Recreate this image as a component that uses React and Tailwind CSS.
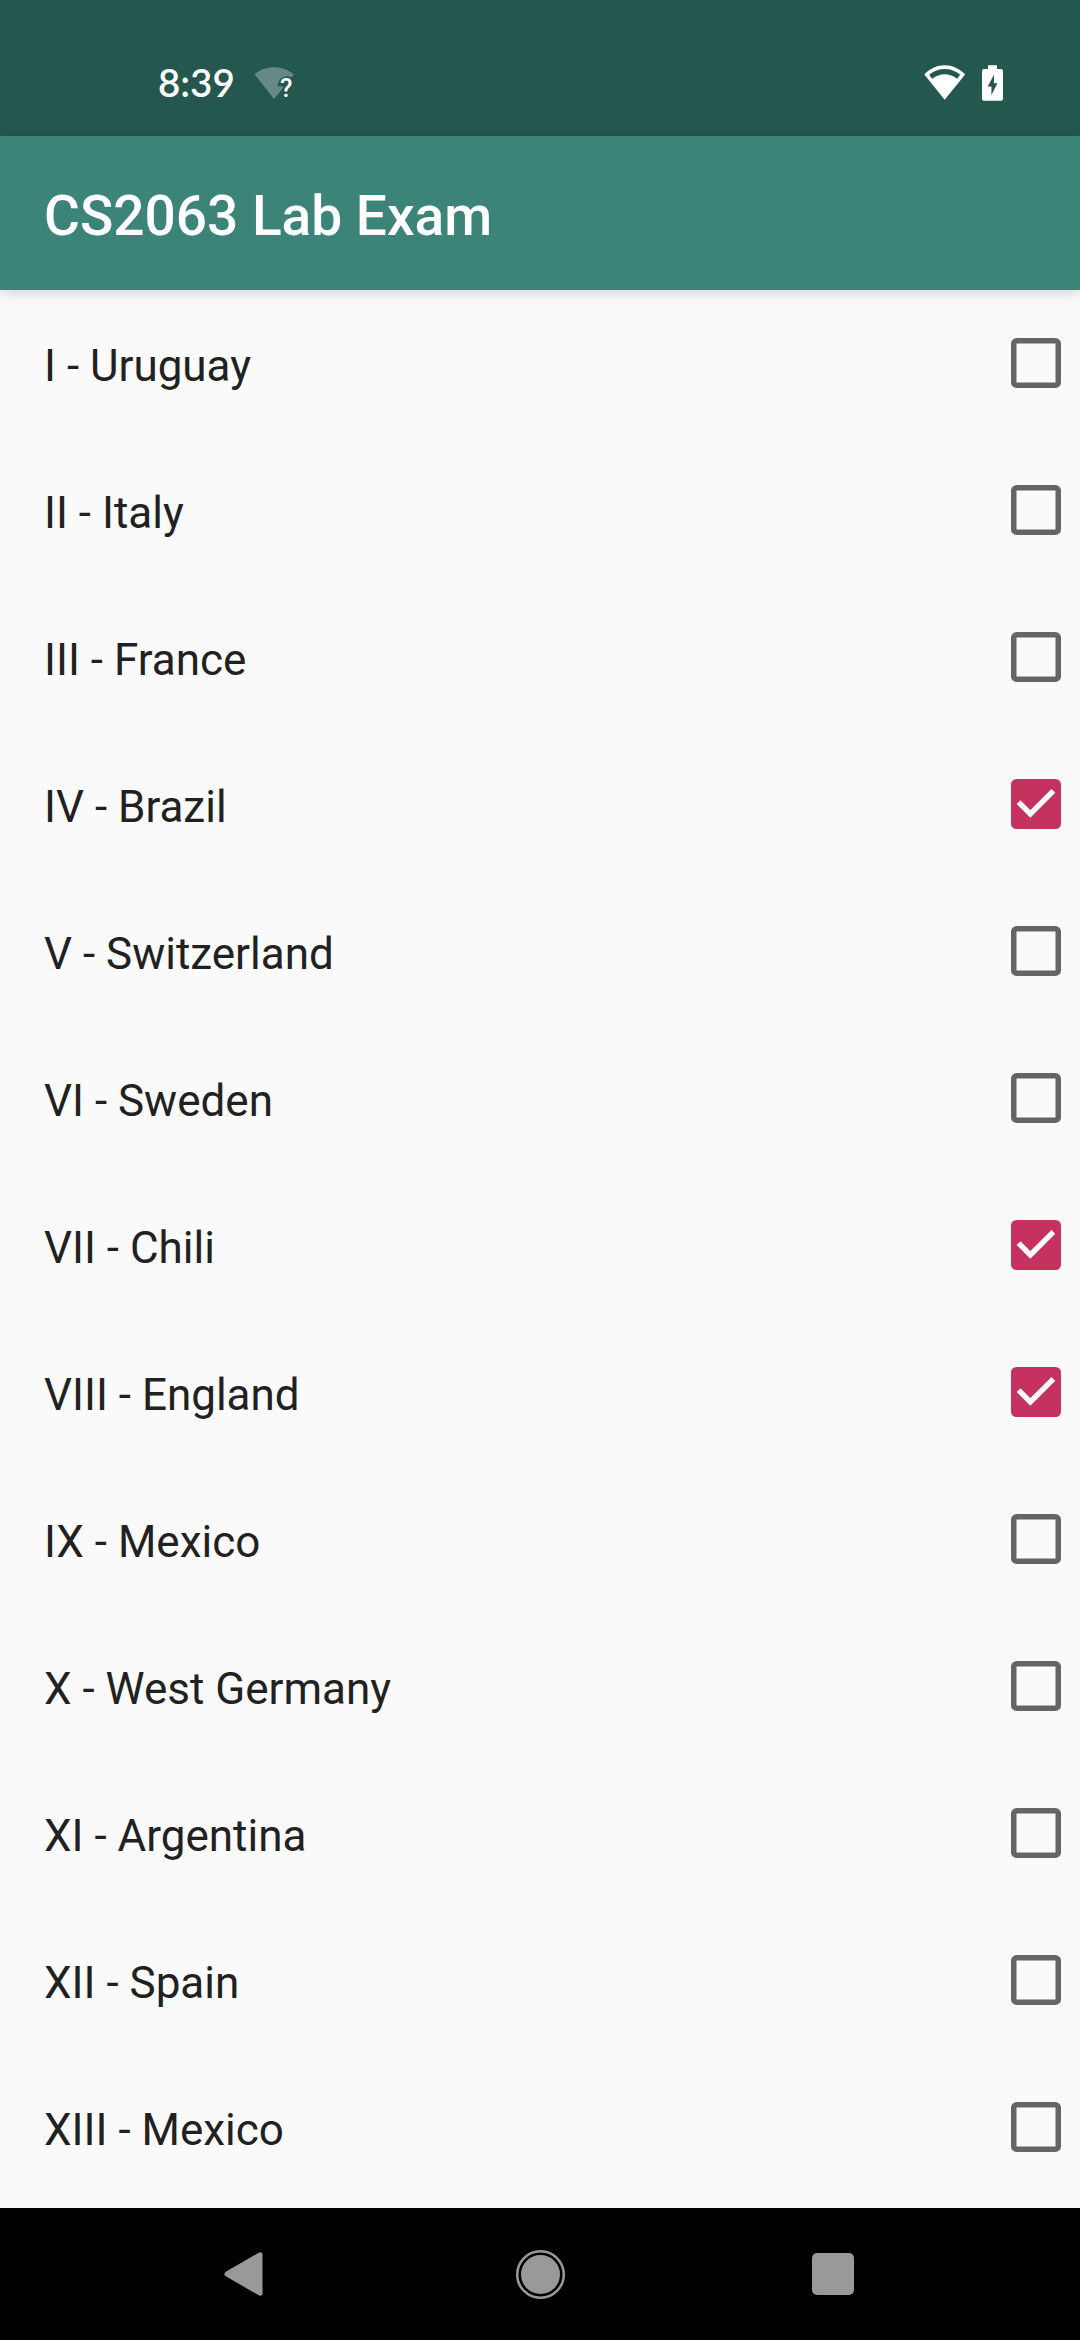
const items = [
  { label: 'I - Uruguay', checked: false },
  { label: 'II - Italy', checked: false },
  { label: 'III - France', checked: false },
  { label: 'IV - Brazil', checked: true },
  { label: 'V - Switzerland', checked: false },
  { label: 'VI - Sweden', checked: false },
  { label: 'VII - Chili', checked: true },
  { label: 'VIII - England', checked: true },
  { label: 'IX - Mexico', checked: false },
  { label: 'X - West Germany', checked: false },
  { label: 'XI - Argentina', checked: false },
  { label: 'XII - Spain', checked: false },
  { label: 'XIII - Mexico', checked: false },
];

function WifiUnknown() {
  return (
    <svg className="block h-[44px] w-[48px]" viewBox="0 0 48 44" aria-hidden="true">
      <path
        d="M22 34 L2.5 9.3 C8 4.8 14.5 2.3 22 2.3 C29.5 2.3 36 4.8 41.8 9.3 L39.6 12.2 C33 9.5 26 13.5 25.8 21.2 H31.5 L29.5 25 Z"
        fill="#fff"
        fillOpacity="0.3"
      />
      <text x="28" y="32.3" fontFamily="Roboto, sans-serif" fontWeight="500" fontSize="25.5" fill="#fff">?</text>
    </svg>
  );
}

function Wifi() {
  return (
    <svg className="block h-[37px] w-[42px]" viewBox="0 0 42 37" aria-hidden="true">
      <path
        d="M20.7 34.8 L0.3 9.4 C6 3.6 13 0.3 20.7 0.3 C28.4 0.3 35.4 3.6 41.1 9.4 Z M5.2 9.7 L8.3 13.7 C15.5 7.7 26 7.7 33.1 13.7 L36.2 9.7 C27.5 2.1 13.9 2.1 5.2 9.7 Z"
        fill="#fff"
        fillRule="evenodd"
      />
    </svg>
  );
}

function BatteryCharging() {
  return (
    <svg className="block h-[36px] w-[21px]" viewBox="0 0 21 36" aria-hidden="true">
      <path
        d="M6 0.3 H15 V4 H19 Q21 4 21 6 V33.7 Q21 35.7 19 35.7 H2 Q0 35.7 0 33.7 V6 Q0 4 2 4 H6 Z M12 9.7 L5.7 21.6 H9.4 V30.2 L15.4 18.2 H12 Z"
        fill="#fff"
        fillRule="evenodd"
      />
    </svg>
  );
}

function Checkbox({ checked }) {
  return (
    <svg className="block size-[50px]" viewBox="0 0 50 50" aria-hidden="true">
      {checked ? (
        <>
          <rect width="50" height="50" rx="5.5" fill="#c6325f" />
          <path d="M7.6 23.2 L19.3 34.9 L42.4 11.9" fill="none" stroke="#fafafa" strokeWidth="5.4" />
        </>
      ) : (
        <rect x="2.75" y="2.75" width="44.5" height="44.5" rx="2.8" fill="none" stroke="#656565" strokeWidth="5.5" />
      )}
    </svg>
  );
}

export default function App() {
  return (
    <div className="flex h-[2340px] w-[1080px] flex-col overflow-hidden bg-[#fafafa] font-['Roboto',sans-serif]">
      <div className="flex h-[136px] shrink-0 items-start bg-[#24574e] pt-[65px] pr-[77px] pl-[158px]">
        <div className="flex w-[94px] text-[38.5px] leading-[34px] font-semibold text-white font-['Lato',sans-serif]">8:39</div>
        <WifiUnknown />
        <div className="ml-auto flex gap-[16px]">
          <Wifi />
          <BatteryCharging />
        </div>
      </div>
      <header className="z-10 flex h-[154px] shrink-0 items-center bg-[#3b8477] px-[44px] pt-[6px] shadow-[0_3px_12px_rgba(0,0,0,0.16)]">
        <h1 className="text-[55px] leading-[64px] font-medium text-white">CS2063 Lab Exam</h1>
      </header>
      <ul className="min-h-0 flex-1 overflow-hidden">
        {items.map((item) => (
          <li key={item.label} className="flex h-[147px] items-start justify-between pr-[19px] pl-[44px]">
            <span className="pt-[50px] text-[44px] leading-[52px] text-[#212121]">{item.label}</span>
            <span className="pt-[48px]">
              <Checkbox checked={item.checked} />
            </span>
          </li>
        ))}
      </ul>
      <nav className="flex h-[132px] shrink-0 items-center bg-black pl-[223px]">
        <svg className="block h-[46px] w-[41px]" viewBox="0 0 41 46" aria-hidden="true">
          <path d="M4 23 L37 3.8 V42.2 Z" fill="#999" stroke="#999" strokeWidth="5" strokeLinejoin="round" />
        </svg>
        <svg className="ml-[251px] block size-[50px]" viewBox="0 0 50 50" aria-hidden="true">
          <circle cx="25.5" cy="25.5" r="23.3" fill="none" stroke="#999" strokeWidth="2.5" />
          <circle cx="25.5" cy="25.5" r="19.5" fill="#999" />
        </svg>
        <span className="ml-[247px] block size-[42px] rounded-[5px] bg-[#999]" />
      </nav>
    </div>
  );
}
